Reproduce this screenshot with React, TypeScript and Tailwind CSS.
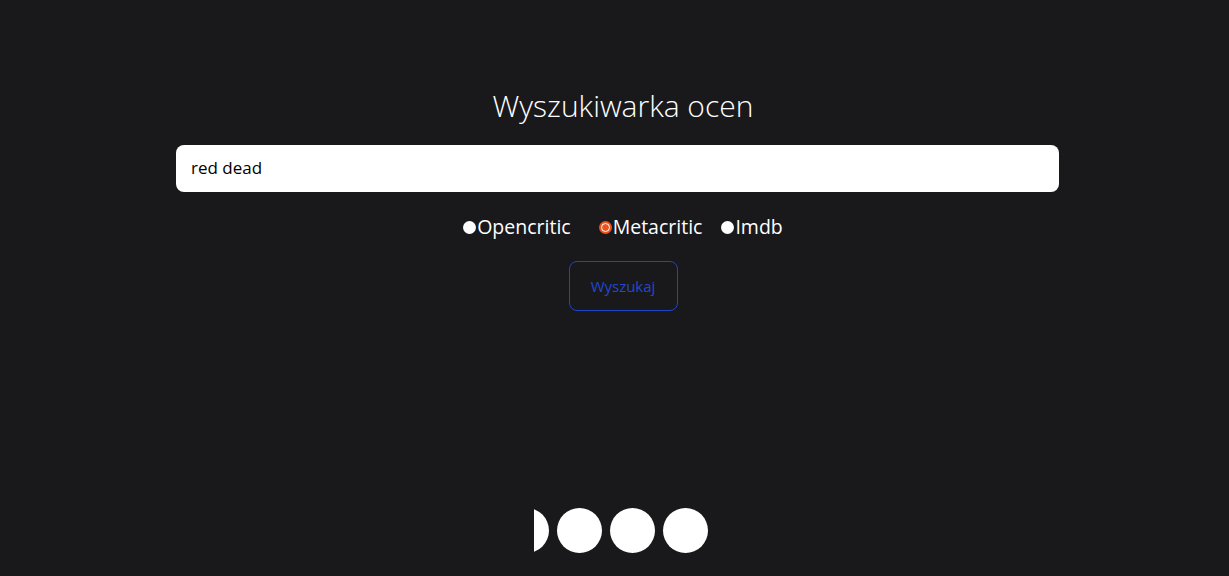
import React, { useState } from 'react';

const sources = ['Opencritic', 'Metacritic', 'Imdb'];

const Radio = ({ checked }: { checked: boolean }) =>
  checked ? (
    <span className="flex h-[13px] w-[13px] items-center justify-center rounded-full bg-[#e95420]">
      <span className="h-[9px] w-[9px] rounded-full border-[1.5px] border-white bg-[#e95420]" />
    </span>
  ) : (
    <span className="h-[13px] w-[13px] rounded-full bg-white" />
  );

const App = () => {
  const [query] = useState('red dead');
  const [source, setSource] = useState('Metacritic');

  return (
    <div className="flex h-[576px] w-full flex-col items-center overflow-hidden bg-[#19191b] pl-[17px] font-['Open_Sans',sans-serif]">
      <h1 className="mt-[86px] text-[30px] font-light leading-[40px] text-white">
        Wyszukiwarka ocen
      </h1>

      <div className="mr-[11px] mt-[19px] flex h-[47px] w-[883px] items-center rounded-lg bg-white px-[15px]">
        <span className="-mt-[1px] text-[17px] text-black">{query}</span>
      </div>

      <div className="mt-[23px] flex h-[24px] items-center text-[19.5px] text-white">
        {sources.map((s, i) => (
          <label
            key={s}
            onClick={() => setSource(s)}
            className={`flex cursor-pointer items-center ${i === 0 ? 'mr-[28px]' : i === 1 ? 'mr-[19px]' : ''}`}
          >
            <Radio checked={source === s} />
            <span className="ml-[1px] leading-[24px]">{s}</span>
          </label>
        ))}
      </div>

      <button className="mt-[22px] h-[50px] w-[109px] rounded-lg border border-[#1f44c9] text-[15px] text-[#2347d0]">
        Wyszukaj
      </button>

      <div className="mr-[4px] mt-[197px] flex w-[174px] gap-[8px] overflow-hidden">
        <span className="-ml-[30px] h-[45px] w-[45px] shrink-0 rounded-full bg-white" />
        <span className="h-[45px] w-[45px] shrink-0 rounded-full bg-white" />
        <span className="h-[45px] w-[45px] shrink-0 rounded-full bg-white" />
        <span className="h-[45px] w-[45px] shrink-0 rounded-full bg-white" />
      </div>
    </div>
  );
};

export default App;
